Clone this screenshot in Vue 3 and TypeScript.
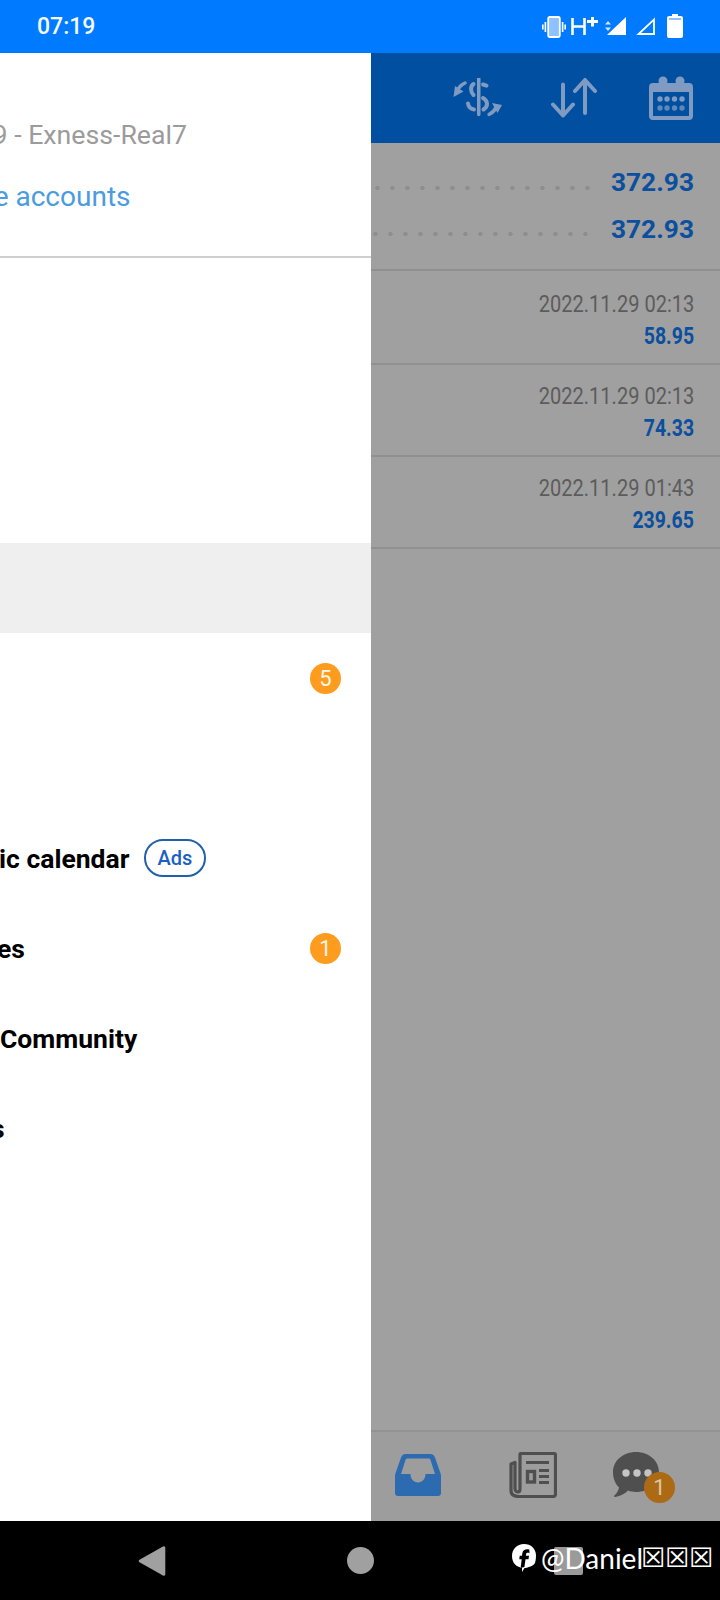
<script setup lang="ts">
interface Deal { date: string; value: string }
interface Item { text?: string; badge?: string; ads?: boolean; active?: boolean; shift?: number }
const deals: Deal[] = [
  { date: '2022.11.29 02:13', value: '58.95' },
  { date: '2022.11.29 02:13', value: '74.33' },
  { date: '2022.11.29 01:43', value: '239.65' },
]
const items: Item[] = [
  {}, {}, {},
  { active: true },
  { badge: '5' },
  {},
  { text: 'ic calendar', ads: true, shift: -1 },
  { text: 'es', badge: '1', shift: -3 },
  { text: 'Community', shift: 0 },
  { text: 's', shift: -9 },
]
</script>

<template>
  <div class="screen">
    <header class="status">
      <span class="time">07:19</span>
      <div class="status-icons">
        <svg class="vib" width="24" height="22" viewBox="0 0 24 22">
          <rect x="6.2" y="1" width="11.6" height="20" rx="1.5" fill="#8fc0ff" stroke="#fff" stroke-width="1.8" />
          <path d="M3.4 6v10M.8 8.5v5M20.6 6v10M23.2 8.5v5" stroke="#fff" stroke-width="1.7" fill="none" />
        </svg>
        <svg class="hplus" width="28" height="20" viewBox="0 0 28 20">
          <path d="M1.5 2v17M13.5 2v17M1.5 10.500h12" stroke="#fff" stroke-width="2.600" fill="none" />
          <path d="M21.500 1v9.500M16 5.500h11" stroke="#fff" stroke-width="3" fill="none" />
        </svg>
        <svg class="updown" width="6" height="10" viewBox="0 0 6 10">
          <path d="M3 0l3 3.500H0zM3 10L0 6.500h6z" fill="#cfe4ff" />
        </svg>
        <svg class="sig1" width="19" height="18" viewBox="0 0 19 18"><path d="M19 0v18H0z" fill="#fff" /></svg>
        <svg class="sig2" width="19" height="18" viewBox="0 0 19 18"><path d="M18 2.500V17H2.500z" fill="none" stroke="#fff" stroke-width="1.800" /></svg>
        <svg class="batt" width="16" height="24" viewBox="0 0 16 24">
          <path d="M5 0h6v2h3a2 2 0 0 1 2 2v18a2 2 0 0 1-2 2H2a2 2 0 0 1-2-2V4a2 2 0 0 1 2-2h3z" fill="#fff" />
          <rect x="2" y="4" width="12" height="2" fill="#8fc0ff" />
        </svg>
      </div>
    </header>

    <main class="main">
      <aside class="drawer">
        <div class="account">
          <div class="server">9 - Exness-Real7</div>
          <div class="manage">e accounts</div>
        </div>
        <ul class="menu">
          <li v-for="(it, i) in items" :key="i" class="item" :class="{ active: it.active }">
            <span v-if="it.text" class="label" :style="{ marginLeft: (it.shift ?? 0) + 'px' }">{{ it.text }}</span>
            <span v-if="it.ads" class="ads">Ads</span>
            <span v-if="it.badge" class="badge">{{ it.badge }}</span>
          </li>
        </ul>
      </aside>

      <section class="pane">
        <div class="appbar">
          <svg width="50" height="40" viewBox="0 0 50 40" fill="#7f9bc1" stroke="none">
            <path d="M24 0h3.500v36.500a1.750 1.750 0 0 1-3.500 0z" />
            <g fill="none" stroke="#7f9bc1" stroke-width="4" stroke-linecap="round">
              <path d="M20.500 6C17 8.500 17.500 14 20.500 17" />
              <path d="M30 6.500l3.500 1.200" />
              <path d="M30 20c5 3 5.500 8 .5 11.500" />
              <path d="M15 25.500c.5 3 3 5.500 6 6" />
            </g>
            <path d="M.5 19 2 8l8.500 5.500z" />
            <path d="M4.500 12.500C6 9 8.500 6.500 12 5" fill="none" stroke="#7f9bc1" stroke-width="3.500" stroke-linecap="round" />
            <path d="M49 27 39 25l5.500 10z" />
            <path d="M36 36.500c3-1.500 5.500-3.500 7-7" fill="none" stroke="#7f9bc1" stroke-width="3.500" stroke-linecap="round" />
          </svg>
          <svg class="swap" width="46" height="40" viewBox="0 0 46 40" fill="none" stroke="#7f9bc1" stroke-width="4" stroke-linecap="round" stroke-linejoin="round">
            <path d="M12 6.500v31M2 26.500l10 11 10-11M34 2v33M24 13 34 2l10 11" />
          </svg>
          <svg class="cal" width="44" height="44" viewBox="0 0 44 44" fill="#7f9bc1">
            <path fill-rule="evenodd" d="M4 7h36a4 4 0 0 1 4 4v29a4 4 0 0 1-4 4H4a4 4 0 0 1-4-4V11a4 4 0 0 1 4-4zm0 9v24h36V16z" />
            <circle cx="14" cy="5" r="4.500" />
            <circle cx="31" cy="5" r="4.500" />
            <g>
              <circle cx="11" cy="23" r="2.700" /><circle cx="18" cy="23" r="2.700" /><circle cx="25.500" cy="23" r="2.700" /><circle cx="33" cy="23" r="2.700" />
              <circle cx="11" cy="32" r="2.700" opacity=".75" /><circle cx="18" cy="32" r="2.700" opacity=".75" /><circle cx="25.500" cy="32" r="2.700" opacity=".75" /><circle cx="33" cy="32" r="2.700" opacity=".75" />
            </g>
          </svg>
        </div>

        <div class="summary">
          <div class="sum-row"><i class="leader"></i><b>372.93</b></div>
          <div class="sum-row second"><i class="leader"></i><b>372.93</b></div>
        </div>

        <div v-for="(d, i) in deals" :key="i" class="deal">
          <span class="date">{{ d.date }}</span>
          <span class="val">{{ d.value }}</span>
        </div>

        <div class="spacer"></div>

        <nav class="tabs">
          <svg width="46" height="42" viewBox="0 0 46 42">
            <path fill="#2d6bb0" fill-rule="evenodd" d="M11 0h24c2.500 0 4 1 5 3.500l5.400 15.500c.4 1 .6 2 .6 3v17a3 3 0 0 1-3 3H3a3 3 0 0 1-3-3V22c0-1 .2-2 .6-3L6 3.500C7 1 8.500 0 11 0zm1.500 4.500c-1 0-1.700.5-2 1.500L6 20h9.500c0 4.500 3 8.500 7.500 8.500s7.500-4 7.500-8.500H40L35.500 6c-.3-1-1-1.500-2-1.500z" />
          </svg>
          <svg class="news" width="48" height="46" viewBox="0 0 48 46" fill="none" stroke="#4f4f4f">
            <path d="M11 2.500a1 1 0 0 1 1-1h33a1.500 1.500 0 0 1 1.500 1.500v39a2.500 2.500 0 0 1-2.500 2.500H10c-4 0-8-1-8-6V12l4-1.500V37c0 2 2 3 3 3s2-1 2-3z" stroke-width="3.200" stroke-linejoin="round" />
            <path d="M17 10.500h23" stroke-width="3" />
            <rect x="18.500" y="19.500" width="7" height="10.500" stroke-width="3.400" />
            <path d="M30 18.500h10M30 24.500h10M30 30.500h10" stroke-width="3" />
          </svg>
          <div class="chat">
            <svg width="46" height="46" viewBox="0 0 46 46">
              <path fill="#4f4f4f" d="M23 0c12.500 0 23 8.500 23 20S35.500 40 23 40c-3 0-5.500-.4-8-1.400-3 3-7 5.400-13 6.400-1 .1-1.300-.8-.6-1.400 2.500-2.500 4-5 4.600-8.200C2.300 32 0 26.500 0 20 0 8.500 10.500 0 23 0z" />
              <circle cx="13" cy="21" r="3.700" fill="#c4c4c4" /><circle cx="24" cy="21" r="3.700" fill="#c4c4c4" /><circle cx="35" cy="21" r="3.700" fill="#c4c4c4" />
            </svg>
            <span class="chat-badge">1</span>
          </div>
        </nav>
      </section>
    </main>

    <footer class="navbar">
      <svg class="nav-back" width="28" height="34" viewBox="0 0 28 34"><path d="M25 2.500a1.500 1.500 0 0 1 2.300 1.300v26.400a1.500 1.500 0 0 1-2.300 1.300L1.500 18.300a1.500 1.500 0 0 1 0-2.600z" fill="#a0a0a0" /></svg>
      <span class="nav-home"></span>
      <span class="nav-recent"></span>
      <div class="mark">
        <svg width="24" height="28" viewBox="0 0 24 28">
          <path fill="#fff" fill-rule="evenodd" d="M12 0c7 0 12 4.800 12 11.500 0 3.500-.6 7-1.500 8.200C20.500 22.300 15 24 12.500 24l-2.500 4v-4.300C4 23.200 0 18.500 0 12 0 5 5 0 12 0zm5.300 5.500c-3.800-.7-6.500.4-7 4l-.3 2.300H7.700l-.4 3.500h2.400L8.600 24l3.800-1 1.100-7.700h3l.5-3.500h-3.100l.2-1.600c.2-1.400 1-1.700 3.400-1.300z" />
        </svg>
        <span class="mark-name">@Daniel</span>
        <span class="mark-box">☒</span><span class="mark-box">☒</span><span class="mark-box">☒</span>
      </div>
    </footer>
  </div>
</template>

<style>
html, body { margin: 0; background: #000; }
</style>

<style scoped>
* { box-sizing: border-box; }
.screen { position: relative; width: 720px; height: 1600px; display: flex; flex-direction: column; overflow: hidden; font-family: Roboto, "Liberation Sans", sans-serif; }

.status { height: 53px; flex: none; background: #007aff; display: flex; align-items: center; justify-content: space-between; padding: 0 37px; color: #fff; }
.time { font-size: 23px; font-weight: 500; color: #f4faff; }
.status-icons { display: flex; align-items: center; }
.vib { margin-right: 5px; }
.hplus { margin-right: 6px; margin-top: -1px; }
.updown { margin-right: -4px; margin-top: -1px; }
.sig1 { margin-right: 10px; margin-top: -1px; }
.sig2 { margin-right: 12px; margin-top: -1px; }
.batt { margin-top: -1px; }

.main { flex: 1; display: flex; min-height: 0; }
.drawer { width: 371px; flex: none; background: #fff; display: flex; flex-direction: column; }
.account { height: 205px; flex: none; border-bottom: 2px solid #cfcfcf; overflow: hidden; display: flex; flex-direction: column; align-items: flex-end; padding: 66px 184px 0 0; }
.server, .manage { white-space: nowrap; line-height: 32px; }
.server { color: #9b9b9b; font-size: 26.700px; }
.manage { color: #4a9be0; font-size: 28px; margin-top: 30px; margin-right: 56.500px; }
.menu { list-style: none; margin: 0; padding: 15px 0 0; }
.item { height: 90px; display: flex; align-items: center; overflow: hidden; padding-right: 30px; }
.item.active { background: #efefef; }
.label { font-size: 26.500px; font-weight: 700; color: #000; white-space: nowrap; }
.ads { margin-left: 14.500px; width: 62px; height: 38px; border: 2px solid #2160ab; border-radius: 19px; display: flex; align-items: center; justify-content: center; font-size: 20px; font-weight: 500; color: #1a60c4; }
.badge { margin-left: auto; width: 31px; height: 31px; border-radius: 50%; background: #fd9c1f; color: #fff8e8; font-size: 22px; display: flex; align-items: center; justify-content: center; }

.pane { flex: 1; background: #a0a0a0; display: flex; flex-direction: column; min-width: 0; }
.appbar { height: 90px; flex: none; background: #004fa0; display: flex; align-items: center; padding: 0 27px 0 82px; }
.swap { margin-left: 48px; }
.cal { margin-left: 52px; }
.summary { height: 128px; flex: none; border-bottom: 2px solid #909090; padding: 23px 26px 0 0; display: flex; flex-direction: column; gap: 14.700px; }
.sum-row { height: 32px; display: flex; align-items: center; justify-content: flex-end; gap: 16px; }
.sum-row.second { gap: 18px; }
.sum-row b { font-size: 26.300px; font-weight: 700; color: #0b4f9f; line-height: 32px; }
.leader { flex: 1; height: 4px; margin-top: 11px; background-image: radial-gradient(circle, #8e8e8e 2px, transparent 2.300px); background-size: 15px 4px; background-position: right center; }
.deal { height: 92px; flex: none; border-bottom: 2px solid #909090; display: flex; flex-direction: column; align-items: flex-end; padding: 15px 26px 0 0; }
.deal:nth-of-type(3) { height: 94px; padding-top: 17px; }
.date, .val { font-size: 24px; line-height: 32px; white-space: nowrap; transform-origin: right center; }
.date { color: #5c5c5c; transform: scaleX(.835); }
.val { font-weight: 700; color: #0b4f9f; transform: scaleX(.81); }
.spacer { flex: 1; }
.tabs { height: 91px; flex: none; border-top: 2px solid #929292; background: #9d9d9d; display: flex; align-items: center; padding: 0 0 4px 24px; }
.news { margin-left: 68px; }
.chat { position: relative; width: 46px; height: 46px; margin-left: 56px; }
.chat-badge { position: absolute; left: 31px; top: 20px; width: 31px; height: 31px; border-radius: 50%; background: #ad6a14; color: #d8c8a8; font-size: 22px; display: flex; align-items: center; justify-content: center; }

.navbar { height: 79px; flex: none; background: #000; display: flex; align-items: center; position: relative; padding-left: 138px; }
.nav-back { margin-right: 181px; }
.nav-home { width: 27px; height: 27px; border-radius: 50%; background: #a0a0a0; margin-right: 180px; }
.nav-recent { width: 29px; height: 28px; background: #9a9a9a; border-radius: 2px; }
.mark { position: absolute; left: 512px; top: 23px; display: flex; align-items: center; color: #fff; white-space: nowrap; }
.mark > * { flex: none; }
.mark-name { font-family: Lato, sans-serif; font-weight: 400; font-size: 28px; margin-left: 5px; line-height: 28px; width: 100px; }
.mark-box { font-family: "DejaVu Sans", sans-serif; font-size: 27px; width: 24px; text-align: center; line-height: 28px; }
</style>
